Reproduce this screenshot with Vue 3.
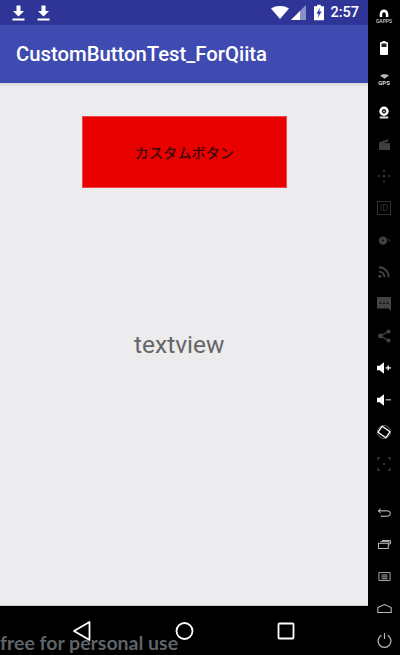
<template>
  <div class="screen">
    <div class="phone">
      <div class="status-bar">
        <div class="downloads">
          <svg v-for="n in 2" :key="n" class="download" width="13" height="16" viewBox="0 0 13 16">
            <path d="M4.5 0.5h4v5.5h3.500L6.500 11.500 1 6h3.500z" fill="#fff" />
            <rect x="0.500" y="13.500" width="12" height="2" fill="#fff" />
          </svg>
        </div>
        <div class="status-right">
          <svg width="18" height="13" viewBox="0 0 18 13">
            <path d="M0 2.500C5 -0.800 13 -0.800 18 2.500L9 13z" fill="#fff" />
          </svg>
          <svg class="signal" width="15" height="15" viewBox="0 0 15 15">
            <path d="M15 0V15H0z" fill="#8b90c6" />
            <path d="M9 6V15H0z" fill="#fff" />
          </svg>
          <svg class="battery" width="10" height="17" viewBox="0 0 11 17">
            <path d="M3.500 0h4v1.500H11V17H0V1.500h3.500z" fill="#fff" />
            <path d="M6.800 3L2.800 9.800h2.400L4.200 14.500 8.300 7.500H5.800z" fill="#3035a0" />
          </svg>
          <span class="clock">2:57</span>
        </div>
      </div>
      <header class="app-bar">CustomButtonTest_ForQiita</header>
      <main class="content">
        <button class="custom-button" type="button">カスタムボタン</button>
        <p class="text-view">textview</p>
      </main>
      <nav class="nav-bar">
        <svg width="20" height="22" viewBox="0 0 20 22">
          <path d="M17.500 2V20L2 11z" fill="none" stroke="#fff" stroke-width="1.800" stroke-linejoin="round" />
        </svg>
        <svg width="20" height="20" viewBox="0 0 20 20">
          <circle cx="9.500" cy="10" r="8" fill="none" stroke="#fff" stroke-width="1.800" />
        </svg>
        <svg width="18" height="18" viewBox="0 0 18 18">
          <rect x="1.500" y="1.500" width="15" height="15" rx="1" fill="none" stroke="#fff" stroke-width="1.800" />
        </svg>
      </nav>
    </div>

    <aside class="toolbar">
      <!-- gapps -->
      <div class="tool">
        <svg width="10" height="8" viewBox="0 0 14 11">
          <path d="M1 11V6.500a6 6 0 0 1 12 0V11H9.500V7a2.500 2.500 0 0 0-5 0v4z" fill="#fff" />
        </svg>
        <span class="tiny">GAPPS</span>
      </div>
      <!-- battery -->
      <div class="tool">
        <svg width="8" height="14" viewBox="0 0 8 14">
          <path d="M2.500 0h3v1H7a1 1 0 0 1 1 1v11a1 1 0 0 1-1 1H1a1 1 0 0 1-1-1V2a1 1 0 0 1 1-1h1.500z" fill="#fff" />
          <rect x="1.500" y="2.500" width="5" height="3.500" fill="#222" />
        </svg>
      </div>
      <!-- gps -->
      <div class="tool">
        <svg width="9" height="5" viewBox="0 0 14 7">
          <path d="M0 2C4 -0.500 10 -0.500 14 2L7 7z" fill="#bbb" />
        </svg>
        <span class="tiny tiny-bold">GPS</span>
      </div>
      <!-- camera -->
      <div class="tool">
        <svg width="10" height="13" viewBox="0 0 16 20">
          <circle cx="8" cy="8" r="7.500" fill="#fff" />
          <circle cx="8" cy="8" r="3.500" fill="#222" />
          <circle cx="8" cy="8" r="1.300" fill="#ddd" />
          <rect x="1" y="16.500" width="14" height="3" rx="1" fill="#ddd" />
        </svg>
      </div>
      <!-- clapper -->
      <div class="tool">
        <svg width="11" height="13" viewBox="0 0 16 16">
          <path d="M0 6h16v10H0z" fill="#3f3f3f" />
          <path d="M0 5.200L13 0.500l1 2.800L1 8z" fill="#3f3f3f" />
        </svg>
      </div>
      <!-- dpad -->
      <div class="tool">
        <svg width="14" height="14" viewBox="0 0 16 16" fill="#333">
          <path d="M8 0l2 3H6zM8 16l2-3H6zM0 8l3-2v4zM16 8l-3-2v4z" />
          <circle cx="8" cy="8" r="1.800" />
        </svg>
      </div>
      <!-- id -->
      <div class="tool">
        <span class="id-box">ID</span>
      </div>
      <!-- media -->
      <div class="tool">
        <svg width="13" height="9" viewBox="0 0 16 12">
          <circle cx="6" cy="6" r="5.500" fill="#414141" />
          <circle cx="6" cy="6" r="1.500" fill="#111" />
          <path d="M14 2l-2 4h2l-1 4 3-5h-2z" fill="#2f2f2f" />
        </svg>
      </div>
      <!-- rss -->
      <div class="tool">
        <svg width="12" height="12" viewBox="0 0 14 14" fill="none" stroke="#444" stroke-width="2.200">
          <path d="M1 1.500c6.500 0 11.500 5 11.500 11.500M1 6.500c3.600 0 6.500 2.900 6.500 6.500" />
          <circle cx="2" cy="12" r="1.800" fill="#444" stroke="none" />
        </svg>
      </div>
      <!-- sms -->
      <div class="tool">
        <svg width="14" height="14" viewBox="0 0 16 16">
          <path d="M0 0h16v16l-3-3H0z" fill="#444" />
          <path d="M3 6h2v2H3zM7 6h2v2H7zM11 6h2v2h-2z" fill="#111" />
        </svg>
      </div>
      <!-- share -->
      <div class="tool">
        <svg width="13" height="14" viewBox="0 0 16 16">
          <path d="M13 2.500L3 8l10 5.500" fill="none" stroke="#444" stroke-width="1.500" />
          <circle cx="13" cy="2.500" r="2.500" fill="#444" />
          <circle cx="3" cy="8" r="3" fill="#444" />
          <circle cx="13" cy="13.500" r="2.500" fill="#444" />
        </svg>
      </div>
      <!-- volume up -->
      <div class="tool">
        <svg width="14" height="12" viewBox="0 0 16 13">
          <path d="M0 4h3l5-4v13L3 9H0z" fill="#fff" />
          <path d="M10 5.500h2v-2h1.500v2H16V7h-2.500v2H12V7h-2z" fill="#fff" />
        </svg>
      </div>
      <!-- volume down -->
      <div class="tool">
        <svg width="14" height="12" viewBox="0 0 16 13">
          <path d="M0 4h3l5-4v13L3 9H0z" fill="#fff" />
          <rect x="10" y="5.500" width="6" height="1.500" fill="#aaa" />
        </svg>
      </div>
      <!-- rotate -->
      <div class="tool">
        <svg width="14" height="14" viewBox="0 0 16 16" fill="none">
          <circle cx="8" cy="8" r="7.400" stroke="#999" stroke-width="0.800" />
          <rect x="2.500" y="3.800" width="11" height="8.400" rx="1" transform="rotate(35 8 8)" stroke="#fff" stroke-width="1.500" />
        </svg>
      </div>
      <!-- screenshot -->
      <div class="tool">
        <svg width="14" height="14" viewBox="0 0 14 14" fill="#333">
          <path d="M0 0h3v1.500H1.500V3H0zM11 0h3v3h-1.500V1.500H11zM0 11h1.500v1.500H3V14H0zM14 11v3h-3v-1.500h1.500V11z" />
          <rect x="6" y="6" width="2" height="2" />
        </svg>
      </div>
      <div class="tool-gap"></div>
      <!-- return -->
      <div class="tool">
        <svg width="14" height="9" viewBox="0 0 16 11" fill="none" stroke="#ddd" stroke-width="1.200">
          <path d="M4 1L1 3.500 4 6M1 3.500h11.500a2.800 2.800 0 0 1 0 6.500H4" />
        </svg>
      </div>
      <!-- recents -->
      <div class="tool">
        <svg width="15" height="9" viewBox="0 0 16 11" fill="none" stroke="#bbb" stroke-width="1.200">
          <rect x="0.600" y="4" width="12" height="6.400" />
          <path d="M3 2h10.500v5M5 0.600h10.400V5" />
        </svg>
      </div>
      <!-- menu -->
      <div class="tool">
        <svg width="15" height="9" viewBox="0 0 16 12" fill="none" stroke="#bbb" stroke-width="1.200">
          <path d="M0.600 0.600h14.800v10.800H0.600zM4 4h8M4 6.500h8M4 9h8" />
        </svg>
      </div>
      <!-- home -->
      <div class="tool">
        <svg width="15" height="9" viewBox="0 0 16 10" fill="none" stroke="#bbb" stroke-width="1.200">
          <path d="M0.600 4L8 0.700 15.400 4v5.400H0.600z" />
        </svg>
      </div>
      <!-- power -->
      <div class="tool">
        <svg width="15" height="15" viewBox="0 0 15 15" fill="none" stroke="#bbb" stroke-width="1.200">
          <path d="M4.500 2.300a6.400 6.400 0 1 0 6 0M7.500 0v6" />
        </svg>
      </div>
    </aside>

    <span class="watermark">free for personal use</span>
  </div>
</template>

<script setup>
</script>

<style>
html,
body {
  margin: 0;
  background: #000;
}
</style>

<style scoped>
.screen {
  position: relative;
  display: flex;
  width: 400px;
  height: 655px;
  overflow: hidden;
  background: #000;
  font-family: Roboto, "Liberation Sans", sans-serif;
}

.phone {
  display: flex;
  flex-direction: column;
  width: 368px;
}

.status-bar {
  display: flex;
  justify-content: space-between;
  align-items: center;
  height: 25px;
  padding: 0 9px 0 12px;
  background: #2f3596;
}

.downloads {
  display: flex;
  gap: 12px;
}

.download {
  display: block;
}

.status-right {
  display: flex;
  align-items: center;
  color: #fff;
}

.signal {
  margin-left: 2px;
}

.battery {
  margin-left: 8px;
}

.clock {
  margin-left: 6px;
  font-size: 14.500px;
  font-weight: 500;
}

.app-bar {
  display: flex;
  align-items: center;
  height: 58px;
  padding-left: 16px;
  background: #3f4bb0;
  color: #fff;
  font-size: 20.300px;
  font-weight: 500;
}

.content {
  flex: 1;
  display: flex;
  flex-direction: column;
  padding-top: 33px;
  background: linear-gradient(#d4d3d8, #ecebee 4px);
  border-bottom: 1px solid #c9c9c9;
}

.custom-button {
  width: 205px;
  height: 72px;
  margin-left: 82px;
  padding: 0;
  border: 1px solid #f04a4a;
  background: #e90000;
  color: #3a0808;
  font-family: "Noto Sans CJK JP", sans-serif;
  font-size: 14px;
  letter-spacing: 0.200px;
  font-weight: 500;
}

.text-view {
  margin: 143px 0 0 134px;
  color: #666;
  font-size: 24.500px;
  line-height: 28px;
}

.nav-bar {
  display: flex;
  justify-content: space-between;
  align-items: center;
  height: 49px;
  padding: 0 73px 0 72px;
  background: #000;
}

.toolbar {
  display: flex;
  flex-direction: column;
  width: 32px;
  height: 655px;
}

.tool {
  display: flex;
  flex-direction: column;
  justify-content: center;
  align-items: center;
  flex: none;
  height: 32px;
}

.tool-gap {
  flex: none;
  height: 16px;
}

.tiny {
  margin-top: 1px;
  color: #ccc;
  font-size: 5px;
  font-weight: 500;
  line-height: 6px;
}

.tiny-bold {
  font-size: 6px;
  font-weight: 700;
  color: #ddd;
}

.id-box {
  width: 12px;
  height: 12px;
  border: 1px solid #333;
  color: #333;
  font-size: 9px;
  line-height: 12px;
  text-align: center;
}

.watermark {
  position: absolute;
  left: 0;
  bottom: 0;
  color: #5f6468;
  font-family: Lato, sans-serif;
  font-size: 19.500px;
  font-weight: 700;
  line-height: 24px;
}
</style>
